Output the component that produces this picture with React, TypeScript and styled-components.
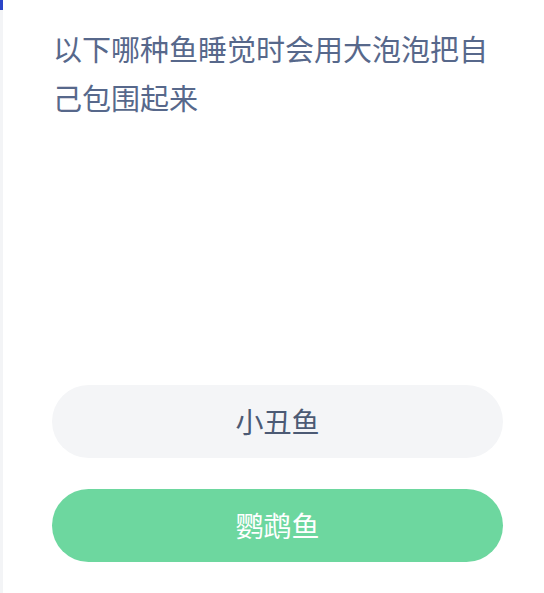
import React from 'react';
import styled, { createGlobalStyle } from 'styled-components';

const GlobalStyle = createGlobalStyle`
  html, body {
    margin: 0;
    padding: 0;
    background: #ffffff;
  }
  body {
    font-family: "Noto Sans CJK SC", "Noto Sans", sans-serif;
  }
`;

const Page = styled.div`
  position: relative;
  width: 544px;
  height: 593px;
  box-sizing: border-box;
  padding: 24px 41px 0 52px;
  background: #ffffff;
  border-left: 3px solid #f3f4f6;
  display: flex;
  flex-direction: column;
`;

const Marker = styled.div`
  position: absolute;
  left: -3px;
  top: 0;
  z-index: 1;
  width: 3px;
  height: 10px;
  background: #2a45c8;
`;

const Question = styled.div`
  font-size: 29px;
  line-height: 49px;
  color: #57688b;
  margin-left: -2px;
`;

const Options = styled.div`
  margin-top: 263px;
  display: flex;
  flex-direction: column;
  gap: 31px;
  margin-left: -3px;
`;

const Option = styled.div<{ $correct?: boolean }>`
  height: 73px;
  border-radius: 37px;
  display: flex;
  align-items: center;
  justify-content: center;
  font-size: 28px;
  padding-bottom: 2px;
  box-sizing: border-box;
  background: ${p => (p.$correct ? '#6dd79f' : '#f4f5f7')};
  color: ${p => (p.$correct ? '#ffffff' : '#4c5a74')};
`;

const options = [
  { text: '小丑鱼', correct: false },
  { text: '鹦鹉鱼', correct: true },
];

export default function App() {
  return (
    <>
      <GlobalStyle />
      <Page>
        <Marker />
        <Question>以下哪种鱼睡觉时会用大泡泡把自己包围起来</Question>
        <Options>
          {options.map(o => (
            <Option key={o.text} $correct={o.correct}>
              {o.text}
            </Option>
          ))}
        </Options>
      </Page>
    </>
  );
}
